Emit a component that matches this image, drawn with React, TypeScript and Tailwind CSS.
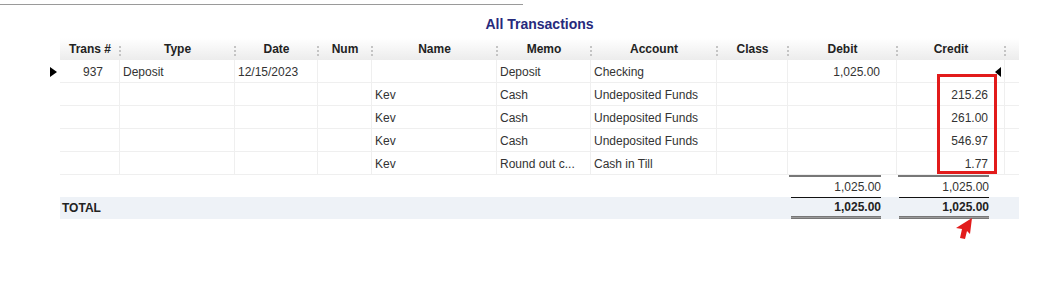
import React from "react";

const cols = [
  { label: "Trans #", align: "right" },
  { label: "Type", align: "left" },
  { label: "Date", align: "left" },
  { label: "Num", align: "left" },
  { label: "Name", align: "left" },
  { label: "Memo", align: "left" },
  { label: "Account", align: "left" },
  { label: "Class", align: "left" },
  { label: "Debit", align: "right" },
  { label: "Credit", align: "right" },
  { label: "", align: "left" },
];

const rows: string[][] = [
  ["937", "Deposit", "12/15/2023", "", "", "Deposit", "Checking", "", "1,025.00", "", ""],
  ["", "", "", "", "Kev", "Cash", "Undeposited Funds", "", "", "215.26", ""],
  ["", "", "", "", "Kev", "Cash", "Undeposited Funds", "", "", "261.00", ""],
  ["", "", "", "", "Kev", "Cash", "Undeposited Funds", "", "", "546.97", ""],
  ["", "", "", "", "Kev", "Round out c...", "Cash in Till", "", "", "1.77", ""],
];

const grid =
  "grid grid-cols-[60px_115px_83px_54px_125px_94px_126px_71px_109px_108px_14px]";

function Dots() {
  return (
    <div className="absolute right-[-1px] top-[8px] flex flex-col gap-[2px]">
      <span className="block h-[2px] w-[2px] bg-[#c4c4c4]" />
      <span className="block h-[2px] w-[2px] bg-[#c4c4c4]" />
      <span className="block h-[2px] w-[2px] bg-[#c4c4c4]" />
    </div>
  );
}

export default function App() {
  return (
    <div
      className="relative w-[1048px] h-[292px] bg-white overflow-hidden"
      style={{ fontFamily: '"Liberation Sans", Arial, sans-serif' }}
    >
      <div className="h-px w-[523px] bg-[#9a9a9a] mt-[4px]" />
      <div className="ml-[60px] w-[959px]">
        <div className="h-[33px] pt-[10px] text-center text-[14px] font-bold leading-[18px] text-[#262a7c]">
          All Transactions
        </div>
        {/* header */}
        <div className={`${grid} h-[22px] bg-gradient-to-b from-[#ffffff] to-[#ececec]`}>
          {cols.map((c, i) => (
            <div
              key={i}
              className="relative flex items-center justify-center text-[12px] font-bold text-[#222]"
            >
              {c.label}
              {i < 10 && <Dots />}
            </div>
          ))}
        </div>
        {/* data rows */}
        {rows.map((r, ri) => (
          <div key={ri} className={`${grid} h-[23px] border-b border-[#efefef]`}>
            {r.map((v, ci) => (
              <div
                key={ci}
                className={`flex items-center pt-[1px] text-[12px] text-[#333] ${
                  ci < 10 ? "border-r border-[#efefef]" : ""
                } ${
                  cols[ci].align === "right"
                    ? "justify-end pr-[16px]"
                    : "justify-start pl-[3px]"
                }`}
              >
                {v}
              </div>
            ))}
          </div>
        ))}
        {/* subtotal */}
        <div className={`${grid} h-[22px]`}>
          <div className="col-span-8" />
          <div className="flex justify-end pr-[16px]">
            <div className="w-[92px] border-t-2 border-[#777] text-right text-[12px] leading-[20px] text-[#333] pt-[0px]">
              1,025.00
            </div>
          </div>
          <div className="flex justify-end pr-[16px]">
            <div className="w-[91px] border-t-2 border-[#777] text-right text-[12px] leading-[20px] text-[#333]">
              1,025.00
            </div>
          </div>
          <div />
        </div>
        {/* total */}
        <div className={`${grid} h-[22px] bg-[#eef2f7]`}>
          <div className="col-span-8 flex items-center pl-[2px] text-[12px] font-bold text-[#222]">
            TOTAL
          </div>
          <div className="flex justify-end pr-[16px]">
            <div className="w-[90px] border-t border-[#111] text-right text-[12px] font-bold leading-[18px] text-[#222]">
              1,025.00
              <div className="h-[3px] border-y border-[#777] bg-[#9a9a9a]" />
            </div>
          </div>
          <div className="flex justify-end pr-[16px]">
            <div className="w-[90px] border-t border-[#111] text-right text-[12px] font-bold leading-[18px] text-[#222]">
              1,025.00
              <div className="h-[3px] border-y border-[#777] bg-[#9a9a9a]" />
            </div>
          </div>
          <div />
        </div>
      </div>

      {/* row markers */}
      <svg className="absolute left-[50px] top-[67px]" width="7" height="10" viewBox="0 0 7 10">
        <polygon points="0,0 7,5 0,10" fill="#000" />
      </svg>
      <svg className="absolute left-[995px] top-[67px]" width="6" height="10" viewBox="0 0 6 10">
        <polygon points="6,0 0,5 6,10" fill="#000" />
      </svg>

      {/* red highlight box */}
      <div className="absolute left-[937px] top-[74px] w-[60px] h-[100px] border-[3px] border-[#e21b1b]" />

      {/* red arrow */}
      <svg className="absolute left-[954px] top-[216px]" width="22" height="26" viewBox="0 0 22 26">
        <polygon points="18,2 2,12 8,13 6,22 11,23 13,15 16,18" fill="#e21b1b" />
      </svg>
    </div>
  );
}
